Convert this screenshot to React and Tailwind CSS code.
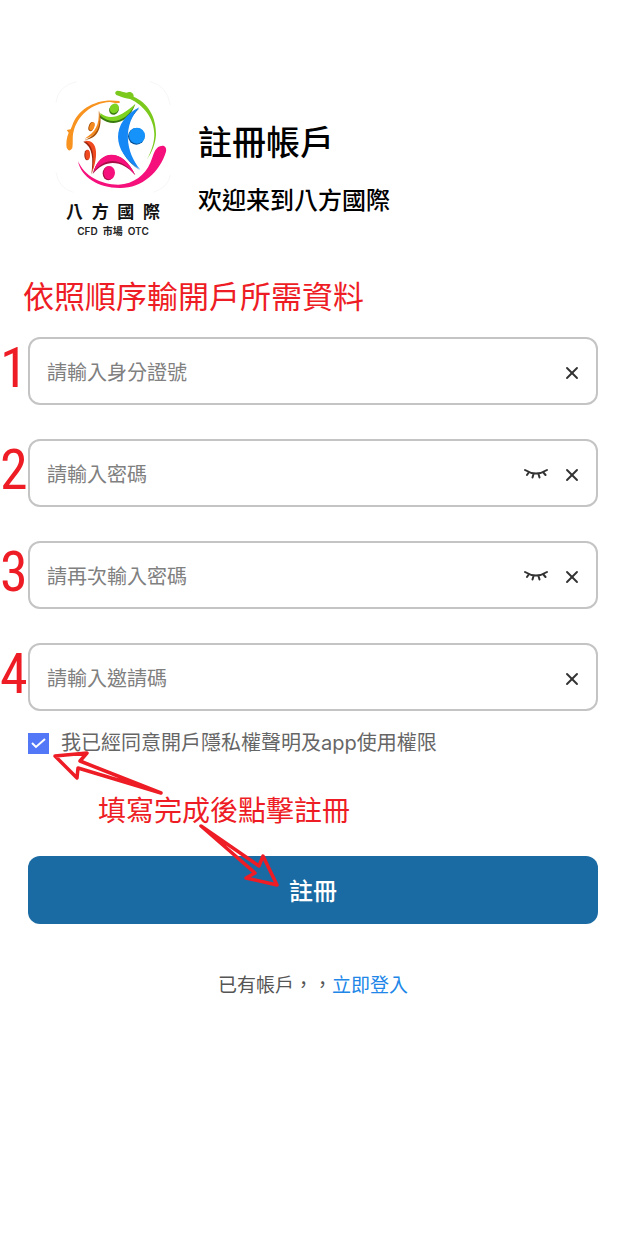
import React, { useState } from 'react';
import { X } from 'lucide-react';

const fields = [
  { id: 'idNumber', step: '1', label: '請輸入身分證號', type: 'text' },
  { id: 'password', step: '2', label: '請輸入密碼', type: 'password' },
  { id: 'confirmPassword', step: '3', label: '請再次輸入密碼', type: 'password' },
  { id: 'inviteCode', step: '4', label: '請輸入邀請碼', type: 'text' },
];

const Logo = () => (
  <svg viewBox="45 36 348 336" className="w-full" aria-hidden="true">
    <path d="M48 100 Q54 50 110 38 M330 38 Q380 48 391 108 M48 310 Q56 358 100 370 M391 318 Q384 356 340 370" fill="none" stroke="#f1f1f1" strokeWidth="2" />

    {/* Outer swooshes */}
    <path d="M238 96 C170 86 113 120 97 169 L92 181 L80 183 L86 191 C79 207 78 224 80 236 Q88 252 97 237 C100 218 96 204 101 187 C112 142 153 102 210 99 L229 103 L240 101 Z" fill="#f7931e" />
    <path d="M232 65 C243 65 250 70 260 71 C271 66 282 73 281 83 C324 101 349 145 348 196 C347 222 337 249 320 273 C334 247 343 222 343 195 C342 149 311 108 270 90 C253 88 239 82 229 78 Q221 69 232 65 Z" fill="#7ac91c" />
    <path d="M360 232 C373 226 381 236 378 248 C359 310 307 356 241 357 C177 358 124 326 114 277 C133 320 181 347 235 347 C283 344 315 318 331 281 C341 257 344 237 360 232 Z" fill="#f5107c" />

    {/* Green figure */}
    <path d="M179 136 C215 168 252 149 286 105 C269 155 223 180 179 146 Z" fill="#397a10" />
    <path d="M181 132 C212 158 246 140 286 105 C263 153 219 172 181 140 Z" fill="#7ed321" />
    <ellipse cx="222" cy="122" rx="14" ry="16" transform="rotate(35 222 122)" fill="#397a10" />
    <ellipse cx="223" cy="118" rx="13" ry="15" transform="rotate(35 223 118)" fill="#7ed321" />

    {/* Blue figure */}
    <path d="M298 118 C219 161 216 247 299 304 C244 260 238 177 298 118 Z" fill="#075095" />
    <path d="M298 115 C213 158 212 247 301 302 C256 249 248 169 298 115 Z" fill="#1688f5" />
    <circle cx="289" cy="202" r="25" fill="#075095" />
    <circle cx="291" cy="200" r="24" fill="#1593fb" />

    {/* Pink figure */}
    <path d="M158 315 C177 240 249 236 286 319 C248 273 196 267 158 315 Z" fill="#a70d45" />
    <path d="M161 308 C181 238 250 239 286 319 C247 268 200 259 161 308 Z" fill="#f5107c" />
    <ellipse cx="205" cy="313" rx="17" ry="21" fill="#a70d45" />
    <ellipse cx="208" cy="311" rx="17" ry="20" fill="#f5107c" />

    {/* Red figure */}
    <path d="M130 218 C166 214 175 252 154 317 C160 269 159 235 130 218 Z" fill="#9c260f" />
    <path d="M133 216 C169 211 179 250 156 313 C164 267 163 230 133 216 Z" fill="#ef4a20" />
    <ellipse cx="141" cy="258" rx="8" ry="16" fill="#9c260f" />
    <ellipse cx="143" cy="257" rx="7" ry="15" fill="#ef4a20" />

    {/* Orange figure */}
    <path d="M178 125 C187 162 182 207 134 213 C168 199 180 177 178 125 Z" fill="#a95108" />
    <path d="M176 124 C185 163 175 202 134 209 C166 189 179 169 176 124 Z" fill="#f58b1f" />
    <ellipse cx="154" cy="173" rx="8" ry="14" transform="rotate(20 154 173)" fill="#a95108" />
    <ellipse cx="156" cy="172" rx="7" ry="13" transform="rotate(20 156 172)" fill="#f58b1f" />
  </svg>
);

const ClosedEye = () => (
  <svg viewBox="0 0 24 11" className="w-6 h-[11px]" fill="none" stroke="currentColor" strokeWidth="2" strokeLinecap="round" aria-hidden="true">
    <path d="M1 2 Q12 9 23 2 M5 4 L3 7 M9.5 6 L8.5 9.5 M14.5 6 L15.5 9.5 M19 4 L21.5 7" />
  </svg>
);

const Field = ({ id, step, label, type }) => {
  const [value, setValue] = useState('');
  const [visible, setVisible] = useState(false);

  return (
    <div className="relative flex items-center h-[68px] pl-[17px] pr-3.5 border-2 border-[#c4c4c4] rounded-xl">
      <label
        htmlFor={id}
        className="absolute -left-[30px] top-0 w-[26px] text-center text-[56px] leading-[58px] font-['Roboto_Condensed',Roboto,sans-serif] font-normal text-[#ee1c25]"
      >
        {step}
      </label>
      <input
        id={id}
        type={visible ? 'text' : type}
        value={value}
        placeholder={label}
        aria-label={label}
        onChange={(e) => setValue(e.target.value)}
        className="flex-1 min-w-0 h-full bg-transparent text-xl text-gray-700 placeholder:text-[#808080] outline-none"
      />
      {type === 'password' && (
        <button type="button" aria-label="顯示密碼" onClick={() => setVisible(!visible)} className="mr-3.5 text-[#333]">
          <ClosedEye />
        </button>
      )}
      <button type="button" aria-label="清除" onClick={() => setValue('')} className="mt-1 text-[#333]">
        <X size={20} strokeWidth={2.25} />
      </button>
    </div>
  );
};

const App = () => {
  return (
    <main lang="zh-Hant" className="min-h-screen bg-white px-7 pt-[81px] pb-10 font-['Noto_Sans_CJK_TC',sans-serif]">
      {/* Brand */}
      <header className="flex pl-[27px]">
        <div className="w-[116px] shrink-0">
          <Logo />
          <div className="flex justify-between px-[11px] mt-2 text-[17px] leading-5 font-bold text-[#111]">
            <span>八</span>
            <span>方</span>
            <span>國</span>
            <span>際</span>
          </div>
          <div className="text-center text-[10px] leading-5 font-semibold text-[#222] font-[Inter,'Noto_Sans_CJK_TC',sans-serif]">
            CFD&nbsp; 市場 &nbsp;OTC
          </div>
        </div>
        <div className="ml-[27px] pt-10">
          <h1 className="text-[34px] leading-10 font-medium text-black">註冊帳戶</h1>
          <p className="mt-5 text-2xl leading-9 font-medium text-black">欢迎来到八方國際</p>
        </div>
      </header>

      <h2 className="-ml-[5px] mt-[34px] text-[31px] leading-10 text-[#ee1c25]">依照順序輸開戶所需資料</h2>

      <form className="mt-[22px]" onSubmit={(e) => e.preventDefault()}>
        <div className="flex flex-col gap-[34px]">
          {fields.map((field) => (
            <Field key={field.id} {...field} />
          ))}
        </div>

        <div className="relative mt-[18px]">
          <label className="flex items-center gap-3 text-xl leading-7 text-[#666] font-[Inter,'Noto_Sans_CJK_TC',sans-serif]">
            <span className="relative flex">
              <input type="checkbox" defaultChecked className="peer appearance-none size-[21px] border border-[#5277f7] checked:bg-[#5277f7]" />
              <svg viewBox="0 0 21 21" className="absolute inset-0 hidden peer-checked:block pointer-events-none" fill="none" stroke="white" strokeWidth="2" aria-hidden="true">
                <path d="M4 10 L8 14 L17 6" />
              </svg>
            </span>
            我已經同意開戶隱私權聲明及app使用權限
          </label>

          <p className="mt-[34px] pl-[70px] text-[28px] leading-9 text-[#ee1c25]">填寫完成後點擊註冊</p>

          {/* Hand-drawn pointers to the checkbox and the submit button */}
          <svg viewBox="0 0 260 170" className="absolute left-0 top-0 w-[260px] h-[170px] pointer-events-none z-10" fill="none" stroke="#ee1c25" strokeWidth="3.5" strokeLinejoin="round" strokeLinecap="round" aria-hidden="true">
            <path d="M133 64 L52 32 L59 24 L27 27 L49 49 L50 39 Z" />
            <path d="M173 97 L231 137 L235 127 L249 156 L218 149 L227 144 Z" />
          </svg>
        </div>

        <button type="submit" className="mt-[29px] w-full h-[68px] rounded-xl bg-[#1a6ba3] text-2xl font-medium text-white">
          註冊
        </button>
      </form>

      <p className="mt-[46px] text-center text-[19px] leading-7 text-[#555]">
        已有帳戶，，<a href="#login" className="text-[#2086e8]">立即登入</a>
      </p>
    </main>
  );
};

export default App;
